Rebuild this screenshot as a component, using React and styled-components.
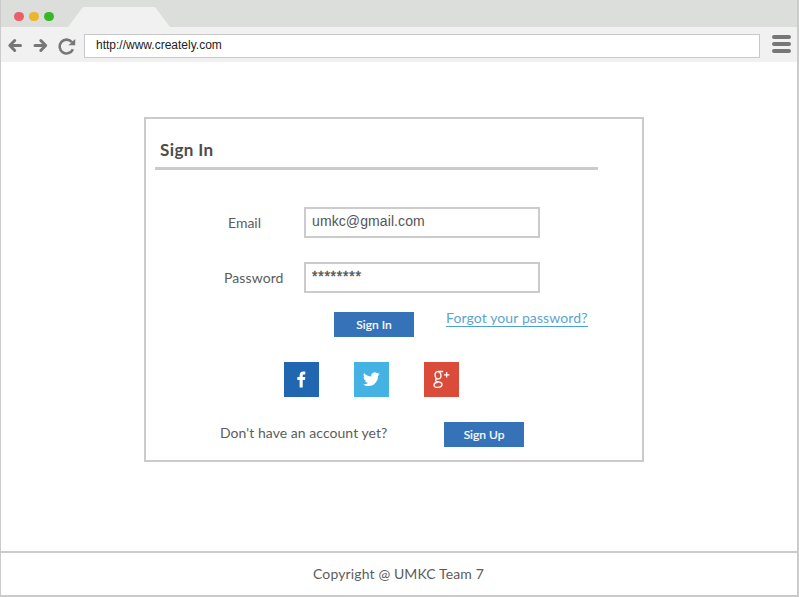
import React from 'react';
import styled, { createGlobalStyle } from 'styled-components';

const GlobalStyle = createGlobalStyle`
  * { box-sizing: border-box; }
  body { margin: 0; background: #fff; font-family: Lato, sans-serif; color: #5c5c5c; }
`;

const Window = styled.div`
  display: flex;
  flex-direction: column;
  width: 799px;
  height: 597px;
  overflow: hidden;
  background: #fff;
  border: solid #cbcbcb;
  border-width: 0 2px 2px 1px;
`;

const TitleBar = styled.div`
  display: flex;
  height: 27px;
  flex: none;
  background: #dcdedb;
`;

const Lights = styled.div`
  display: flex;
  gap: 5.7px;
  padding: 11.6px 0 0 13.2px;
  width: 67px;
`;

const Light = styled.span`
  width: 9.4px;
  height: 9.4px;
  flex: none;
  border-radius: 50%;
  background: ${(p) => p.$color};
`;

const Tab = styled.div`
  width: 102px;
  height: 20px;
  margin-top: 7px;
  background: #f1f1f1;
  clip-path: polygon(0 100%, 15px 0, 87px 0, 100% 100%);
`;

const Toolbar = styled.div`
  display: flex;
  height: 35px;
  flex: none;
  padding-top: 7px;
  background: #f1f1f1;
`;

const NavIcons = styled.svg`
  width: 83px;
  height: 28px;
  flex: none;
`;

const Address = styled.div`
  width: 676px;
  height: 24px;
  padding-left: 11px;
  border: 1px solid #c9c9c9;
  background: #fff;
  color: #222;
  font: 12px/20px "Liberation Sans", Arial, sans-serif;
`;

const Menu = styled.div`
  display: flex;
  flex-direction: column;
  gap: 3px;
  margin: 1px 0 0 12px;
`;

const MenuBar = styled.span`
  width: 19px;
  height: 4px;
  border-radius: 2px;
  background: #777;
`;

const Main = styled.main`
  height: 489px;
  flex: none;
  padding: 55px 0 0 143px;
`;

const Card = styled.form`
  width: 500px;
  height: 345px;
  border: 2px solid #cbcbcb;
`;

const CardTitle = styled.h1`
  width: 443px;
  height: 51px;
  margin: 0 0 37px 9px;
  padding-left: 5px;
  border-bottom: 3px solid #cbcbcb;
  font-size: 17px;
  line-height: 62px;
  font-weight: 700;
  letter-spacing: 0.4px;
  color: #4c4c4c;
`;

const Row = styled.div`
  display: flex;
  height: ${(p) => p.$height}px;
  margin-bottom: ${(p) => p.$after || 0}px;
  padding-left: ${(p) => p.$indent}px;
`;

const Label = styled.label`
  width: ${(p) => p.$width}px;
  flex: none;
  font-size: 14px;
  line-height: ${(p) => p.$line || 32}px;
  letter-spacing: ${(p) => p.$track || 0}px;
  white-space: nowrap;
`;

const Input = styled.input`
  width: 236px;
  height: 31px;
  padding: 0 6px ${(p) => p.$lift}px;
  border: 2px solid #cbcbcb;
  border-radius: 0;
  background: #fff;
  outline: 0;
  color: #555;
  font: 14px "Liberation Sans", Arial, sans-serif;
  letter-spacing: ${(p) => p.$track || 0}px;
  -webkit-text-stroke: ${(p) => p.$stroke || 0}px #555;
`;

const Button = styled.button`
  width: 80px;
  height: 25px;
  padding: 0;
  border: 0;
  background: #3672b7;
  color: #fff;
  font: 12px/25px Lato, sans-serif;
  -webkit-text-stroke: 0.2px #fff;
`;

const Forgot = styled.a`
  height: 15px;
  margin-left: 32px;
  border-bottom: 1px solid #4d9fcf;
  color: #5ba5d0;
  font-size: 14px;
  line-height: 12px;
  letter-spacing: 0.11px;
  white-space: nowrap;
`;

const Socials = styled.div`
  display: flex;
  gap: 35px;
  margin: 0 0 25px 138px;
`;

const Social = styled.a`
  width: 35px;
  height: 35px;
  background: ${(p) => p.$color};
  svg { display: block; }
`;

const Footer = styled.footer`
  height: 44px;
  flex: none;
  padding-left: 312px;
  border-top: 2px solid #cbcbcb;
  font-size: 14px;
  line-height: 41px;
  letter-spacing: 0.13px;
  white-space: nowrap;
`;

export default function App() {
  return (
    <>
      <GlobalStyle />
      <Window>
        <TitleBar>
          <Lights>
            <Light $color="#e9606a" />
            <Light $color="#ecb52e" />
            <Light $color="#38b827" />
          </Lights>
          <Tab />
        </TitleBar>
        <Toolbar>
          <NavIcons viewBox="1 34 83 28" fill="none" stroke="#777" strokeWidth="3" strokeLinecap="round" strokeLinejoin="round">
            <path d="M20.5 45.5H10M14.7 40.5 9.8 45.5l4.9 5" />
            <path d="M35 45.5h10.5M40.8 40.5l4.9 5-4.9 5" />
            <path d="M72 42.3A6.9 6.9 0 1 0 72.9 49.2" strokeLinecap="butt" strokeWidth="2.6" />
            <path d="M75.2 39v6.3h-6.9l2.8-2.2 1.8-2z" fill="#777" stroke="none" />
          </NavIcons>
          <Address>http://www.creately.com</Address>
          <Menu>
            <MenuBar />
            <MenuBar />
            <MenuBar />
          </Menu>
        </Toolbar>
        <Main>
          <Card>
            <CardTitle>Sign In</CardTitle>
            <Row $height={31} $after={24} $indent={82}>
              <Label htmlFor="email" $width={76}>Email</Label>
              <Input id="email" defaultValue="umkc@gmail.com" $lift={3} $track={0.1} />
            </Row>
            <Row $height={31} $after={19} $indent={78}>
              <Label htmlFor="password" $width={80} $track={0.1}>Password</Label>
              <Input id="password" defaultValue="********" $lift={4} $track={0.75} $stroke={0.4} />
            </Row>
            <Row $height={25} $after={25} $indent={188}>
              <Button type="button">Sign In</Button>
              <Forgot>Forgot your password?</Forgot>
            </Row>
            <Socials>
              <Social $color="#2066b0" aria-label="Facebook">
                <svg width="35" height="35" viewBox="0 0 35 35">
                  <path fill="#fff" d="M15.6 25.5V18H13.3v-2.9h2.3v-1.7c0-2.5 1.4-3.8 3.6-3.8h2.1v2.8h-1.4c-.9 0-1.2.4-1.2 1.2v1.5h2.6L21 18h-2.3v7.5z" />
                </svg>
              </Social>
              <Social $color="#44b3e4" aria-label="Twitter">
                <svg width="35" height="35" viewBox="0 0 35 35">
                  <path fill="#fff" transform="translate(9 8.7) scale(.7)" d="M23.95 4.57a10 10 0 0 1-2.82.77 4.96 4.96 0 0 0 2.16-2.72c-.95.55-2 .95-3.13 1.18a4.92 4.92 0 0 0-8.38 4.48C7.69 8.09 4.07 6.13 1.64 3.16a4.9 4.9 0 0 0 1.52 6.57 4.9 4.9 0 0 1-2.23-.61v.06a4.92 4.92 0 0 0 3.95 4.83 5 5 0 0 1-2.22.08 4.94 4.94 0 0 0 4.6 3.42A9.87 9.87 0 0 1 0 19.54a14 14 0 0 0 7.55 2.21c9.05 0 14-7.5 14-13.98 0-.21 0-.42-.02-.63a9.9 9.9 0 0 0 2.46-2.55z" />
                </svg>
              </Social>
              <Social $color="#db4b39" aria-label="Google Plus">
                <svg width="35" height="35" viewBox="0 0 35 35" fill="none" stroke="#fff" strokeWidth="1.3">
                  <ellipse cx="14" cy="13.3" rx="2.9" ry="3.7" transform="rotate(-8 14 13.3)" />
                  <path d="M13.6 9.5h5.5M12.7 16.8c-2.2 1.5-1.2 2.5 1 2.9 3 .5 4.4 1.2 4.3 2.9-.2 3.3-8 3.9-8 .6 0-1.9 1.8-2.8 4-3.2" />
                  <path d="M20 12.8h5.4M22.7 10.1v5.4" strokeWidth="1.2" />
                </svg>
              </Social>
            </Socials>
            <Row $height={25} $indent={74}>
              <Label as="span" $width={224} $line={22} $track={0.05}>Don't have an account yet?</Label>
              <Button type="button">Sign Up</Button>
            </Row>
          </Card>
        </Main>
        <Footer>Copyright @ UMKC Team 7</Footer>
      </Window>
    </>
  );
}
